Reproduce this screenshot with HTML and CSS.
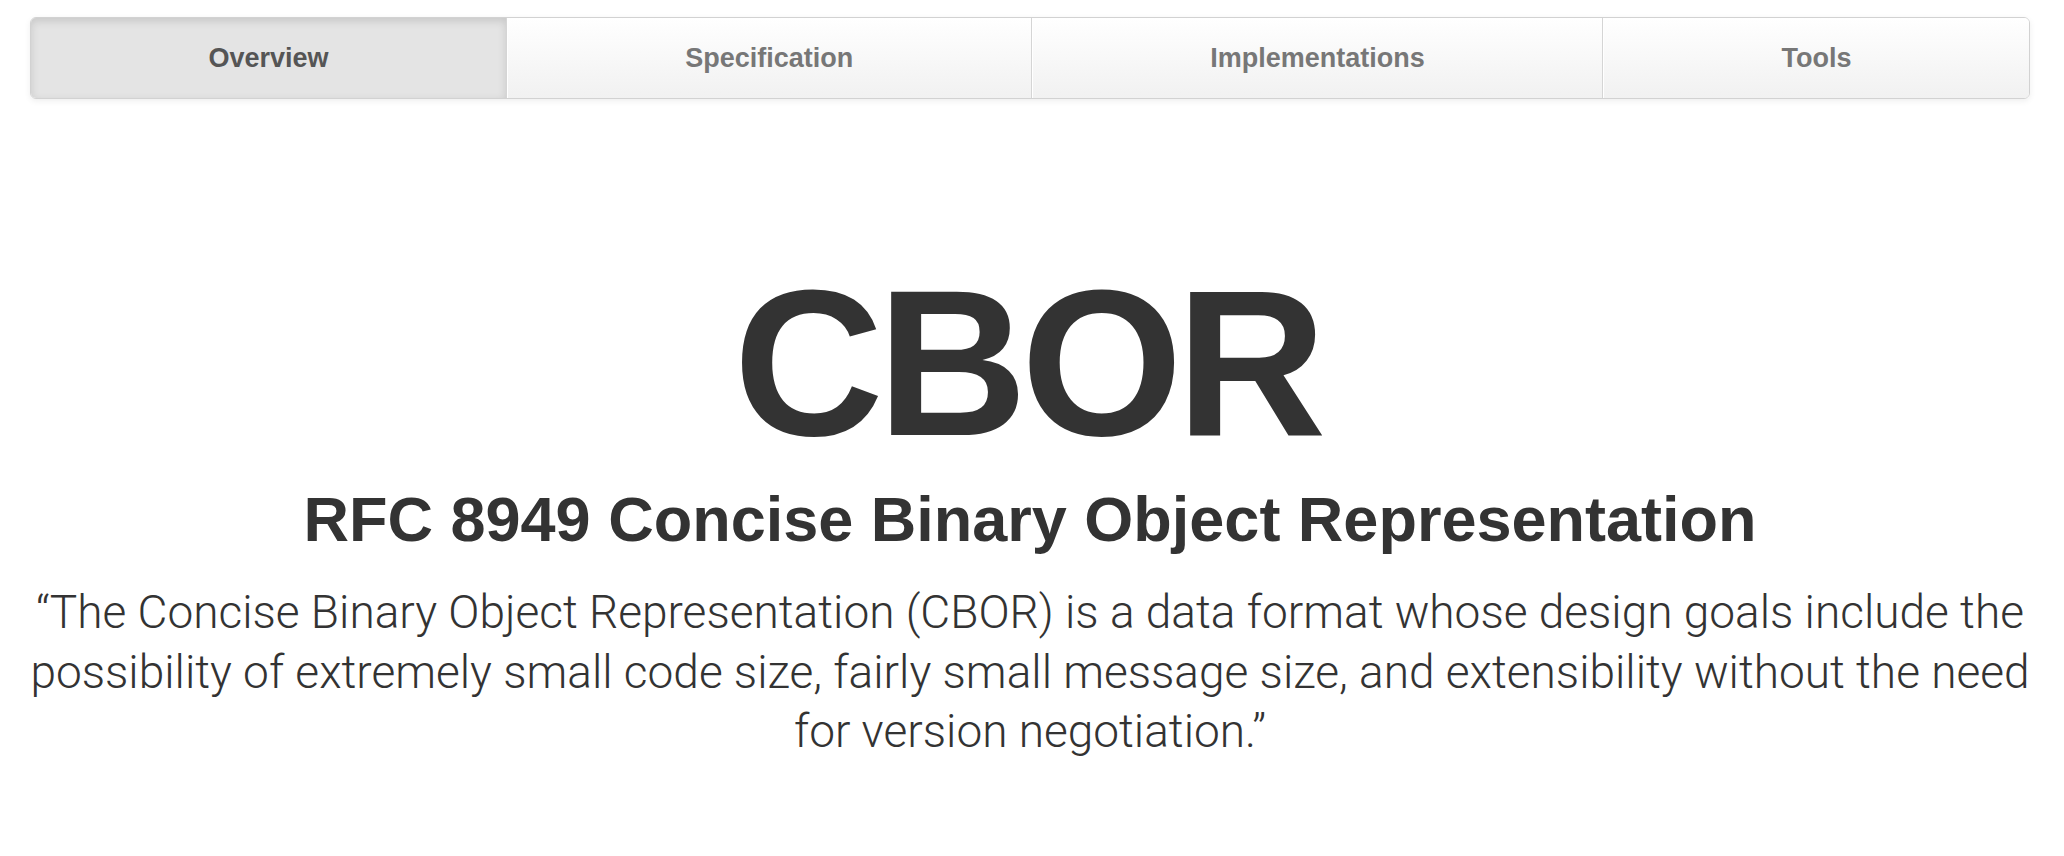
FILE: index.html
```html
<!DOCTYPE html>
<html lang="en">
<head>
<meta charset="utf-8">
<title>CBOR — Concise Binary Object Representation</title>
<link rel="stylesheet" href="styles.css">
</head>
<body>
<div class="page">
  <nav class="tabs">
    <a class="tab active" href="#">Overview</a>
    <a class="tab" href="#">Specification</a>
    <a class="tab" href="#">Implementations</a>
    <a class="tab" href="#">Tools</a>
  </nav>
  <header class="hero">
    <h1 class="title">CBOR</h1>
    <h2 class="subtitle">RFC 8949 Concise Binary Object Representation</h2>
    <p class="lead">“The Concise Binary Object Representation (CBOR) is a data format whose design goals include the possibility of extremely small code size, fairly small message size, and extensibility without the need for version negotiation.”</p>
  </header>
</div>
</body>
</html>
```
FILE: styles.css
```css
html, body {
  margin: 0;
  padding: 0;
  background: #fff;
}
body {
  font-family: "Liberation Sans", Arial, sans-serif;
  color: #333;
}
.page {
  padding: 17px 34px 0 30px;
}
.tabs {
  display: flex;
  height: 80px;
  border: 1px solid #d2d2d2;
  border-radius: 6px;
  overflow: hidden;
  box-shadow: 0 2px 6px rgba(0, 0, 0, 0.07);
}
.tab {
  flex: 1 1 auto;
  display: flex;
  align-items: center;
  justify-content: center;
  font-size: 27px;
  font-weight: bold;
  color: #777;
  text-decoration: none;
  background: linear-gradient(to bottom, #ffffff 0%, #f1f1f1 100%);
  border-left: 1px solid #fff;
  border-right: 1px solid #d5d5d5;
}
.tab:last-child {
  border-right: none;
}
.tab.active {
  color: #555;
  background: #e4e4e4;
  border-left: none;
  box-shadow: inset 0 3px 8px rgba(0, 0, 0, 0.13);
}
.hero {
  text-align: center;
  padding-top: 160px;
}
.title {
  margin: 0;
  font-size: 208px;
  line-height: 208px;
  font-weight: bold;
  letter-spacing: -6.5px;
  text-indent: -6.5px;
}
.subtitle {
  margin: 18px 0 0;
  font-size: 63px;
  line-height: 68px;
  font-weight: bold;
}
.lead {
  margin: 30px -8px 0;
  font-family: Roboto, "Liberation Sans", sans-serif;
  font-weight: 300;
  font-size: 46px;
  line-height: 59.5px;
}
```
